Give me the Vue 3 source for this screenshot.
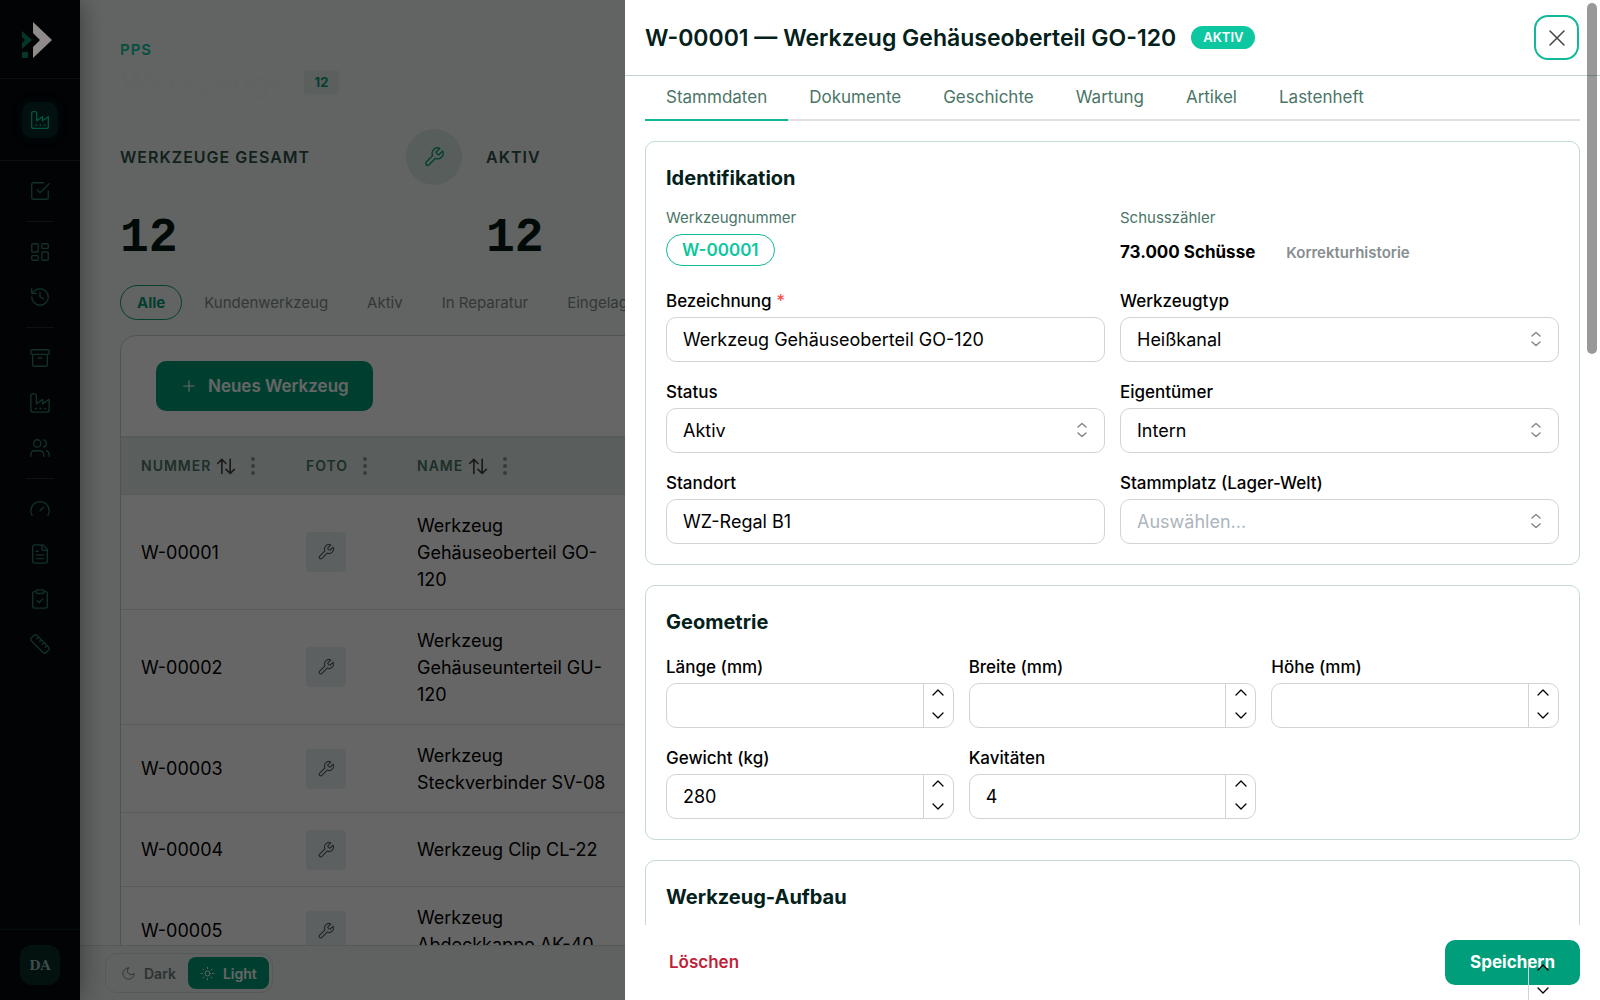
<script setup>
import { ref } from 'vue';

const icons = {
  factory: '<path d="M2 20a2 2 0 0 0 2 2h16a2 2 0 0 0 2-2V8l-7 5V8l-7 5V4a2 2 0 0 0-2-2H4a2 2 0 0 0-2 2Z"/><path d="M17 18h1M12 18h1M7 18h1"/>',
  check: '<path d="m9 11 3 3L22 4"/><path d="M21 12v7a2 2 0 0 1-2 2H5a2 2 0 0 1-2-2V5a2 2 0 0 1 2-2h11"/>',
  dashboard: '<rect x="3" y="3" width="7" height="9" rx="1"/><rect x="14" y="3" width="7" height="5" rx="1"/><rect x="14" y="12" width="7" height="9" rx="1"/><rect x="3" y="16" width="7" height="5" rx="1"/>',
  history: '<path d="M3 12a9 9 0 1 0 9-9 9.75 9.75 0 0 0-6.74 2.74L3 8"/><path d="M3 3v5h5"/><path d="M12 7v5l4 2"/>',
  archive: '<rect x="2" y="3" width="20" height="5" rx="1"/><path d="M4 8v11a2 2 0 0 0 2 2h12a2 2 0 0 0 2-2V8"/><path d="M10 12h4"/>',
  users: '<path d="M16 21v-2a4 4 0 0 0-4-4H6a4 4 0 0 0-4 4v2"/><circle cx="9" cy="7" r="4"/><path d="M22 21v-2a4 4 0 0 0-3-3.87"/><path d="M16 3.13a4 4 0 0 1 0 7.75"/>',
  gauge: '<path d="m12 14 4-4"/><path d="M3.34 19a10 10 0 1 1 17.32 0"/>',
  file: '<path d="M15 2H6a2 2 0 0 0-2 2v16a2 2 0 0 0 2 2h12a2 2 0 0 0 2-2V7Z"/><path d="M14 2v4a2 2 0 0 0 2 2h4"/><path d="M10 9H8M16 13H8M16 17H8"/>',
  clipboard: '<rect x="8" y="2" width="8" height="4" rx="1"/><path d="M16 4h2a2 2 0 0 1 2 2v14a2 2 0 0 1-2 2H6a2 2 0 0 1-2-2V6a2 2 0 0 1 2-2h2"/><path d="m9 14 2 2 4-4"/>',
  ruler: '<path d="M21.3 15.3a2.4 2.4 0 0 1 0 3.4l-2.6 2.6a2.4 2.4 0 0 1-3.4 0L2.7 8.7a2.41 2.41 0 0 1 0-3.4l2.6-2.6a2.41 2.41 0 0 1 3.4 0Z"/><path d="m14.5 12.5 2-2M11.5 9.5l2-2M8.5 6.5l2-2M17.5 15.5l2-2"/>',
  wrench: '<path d="M14.7 6.3a1 1 0 0 0 0 1.4l1.6 1.6a1 1 0 0 0 1.4 0l3.77-3.77a6 6 0 0 1-7.94 7.94l-6.91 6.91a2.12 2.12 0 0 1-3-3l6.91-6.91a6 6 0 0 1 7.94-7.94l-3.76 3.76z"/>',
  plus: '<path d="M5 12h14M12 5v14"/>',
  sort: '<path d="M7 21V4M2 9l5-5 5 5M17 4v17M12 16l5 5 5-5"/>',
  moon: '<path d="M12 3a6 6 0 0 0 9 9 9 9 0 1 1-9-9Z"/>',
  sun: '<circle cx="12" cy="12" r="4"/><path d="M12 2v2M12 20v2M4.9 4.9l1.4 1.4M17.7 17.7l1.4 1.4M2 12h2M20 12h2M6.3 17.7l-1.4 1.4M19.1 4.9l-1.4 1.4"/>',
  close: '<path d="M5 5l14 14M19 5 5 19"/>',
};

const navGroups = [
  ['check'],
  ['dashboard', 'history'],
  ['archive', 'factory', 'users'],
  ['gauge', 'file', 'clipboard', 'ruler'],
];

const kpis = [
  { label: 'Werkzeuge gesamt', value: 12, icon: 'wrench' },
  { label: 'Aktiv', value: 12 },
];

const filters = ['Alle', 'Kundenwerkzeug', 'Aktiv', 'In Reparatur', 'Eingelagert'];
const activeFilter = ref('Alle');

const rows = [
  { id: 'W-00001', name: 'Werkzeug Gehäuseoberteil GO-120' },
  { id: 'W-00002', name: 'Werkzeug Gehäuseunterteil GU-120' },
  { id: 'W-00003', name: 'Werkzeug Steckverbinder SV-08' },
  { id: 'W-00004', name: 'Werkzeug Clip CL-22' },
  { id: 'W-00005', name: 'Werkzeug Abdeckkappe AK-40' },
];

const tabs = ['Stammdaten', 'Dokumente', 'Geschichte', 'Wartung', 'Artikel', 'Lastenheft'];
const activeTab = ref('Stammdaten');

const idFields = ref([
  { id: 'bezeichnung', label: 'Bezeichnung', value: 'Werkzeug Gehäuseoberteil GO-120', required: true },
  { id: 'typ', label: 'Werkzeugtyp', value: 'Heißkanal', select: true },
  { id: 'status', label: 'Status', value: 'Aktiv', select: true },
  { id: 'eigentuemer', label: 'Eigentümer', value: 'Intern', select: true },
  { id: 'standort', label: 'Standort', value: 'WZ-Regal B1' },
  { id: 'stammplatz', label: 'Stammplatz (Lager-Welt)', value: '', select: true },
]);

const geoFields = ref([
  { id: 'laenge', label: 'Länge (mm)', value: '' },
  { id: 'breite', label: 'Breite (mm)', value: '' },
  { id: 'hoehe', label: 'Höhe (mm)', value: '' },
  { id: 'gewicht', label: 'Gewicht (kg)', value: 280 },
  { id: 'kavitaeten', label: 'Kavitäten', value: 4 },
]);

const buildFields = ref([{ id: 'aufbau', label: '', value: '' }]);

const step = (field, delta) => {
  field.value = Number(field.value || 0) + delta;
};
</script>

<template>
  <div class="app">
    <aside class="sidebar">
      <a href="#" class="logo" aria-label="Start">
        <svg width="30" height="36" viewBox="0 0 30 36">
          <path d="M11 0 30 18 11 36V25l7-7-7-7Z" fill="#8f8b8b" />
          <path d="M0 9l10 9-10 9v-6l3-3-3-3Z" fill="#06352b" />
          <rect y="30" width="6" height="6" fill="#06352b" />
        </svg>
      </a>
      <div class="module">
        <a href="#" class="module-link" aria-label="PPS">
          <svg class="icon" width="20" height="20" viewBox="0 0 24 24" v-html="icons.factory"></svg>
        </a>
      </div>
      <nav class="nav">
        <div v-for="(group, i) in navGroups" :key="i" class="nav-group">
          <a v-for="name in group" :key="name" href="#" class="nav-link" :aria-label="name">
            <svg class="icon" width="22" height="22" viewBox="0 0 24 24" v-html="icons[name]"></svg>
          </a>
        </div>
      </nav>
      <div class="user"><button class="avatar">DA</button></div>
    </aside>

    <main class="main">
      <header class="page-head">
        <div class="eyebrow">PPS</div>
        <div class="title-row">
          <h1>Werkzeuge</h1>
          <span class="count">12</span>
        </div>
      </header>

      <section class="kpis">
        <div v-for="kpi in kpis" :key="kpi.label" class="kpi">
          <div class="kpi-head">
            <span class="kpi-label">{{ kpi.label }}</span>
            <span v-if="kpi.icon" class="kpi-icon">
              <svg class="icon" width="22" height="22" viewBox="0 0 24 24" v-html="icons[kpi.icon]"></svg>
            </span>
          </div>
          <div class="kpi-value">{{ kpi.value }}</div>
        </div>
      </section>

      <div class="filters">
        <button v-for="f in filters" :key="f" class="chip" :class="{ active: f === activeFilter }" @click="activeFilter = f">{{ f }}</button>
      </div>

      <section class="table-card">
        <div class="toolbar">
          <button class="new-btn">
            <svg class="icon" width="18" height="18" viewBox="0 0 24 24" v-html="icons.plus"></svg>
            Neues Werkzeug
          </button>
        </div>
        <table>
          <colgroup>
            <col class="col-id" /><col class="col-photo" /><col class="col-name" /><col />
          </colgroup>
          <thead>
            <tr>
              <th>
                <div class="th">Nummer
                  <svg class="icon sort" width="20" height="20" viewBox="0 0 24 24" v-html="icons.sort"></svg>
                  <span class="dots"><i></i><i></i><i></i></span>
                </div>
              </th>
              <th><div class="th">Foto<span class="dots"><i></i><i></i><i></i></span></div></th>
              <th>
                <div class="th">Name
                  <svg class="icon sort" width="20" height="20" viewBox="0 0 24 24" v-html="icons.sort"></svg>
                  <span class="dots"><i></i><i></i><i></i></span>
                </div>
              </th>
              <th></th>
            </tr>
          </thead>
          <tbody>
            <tr v-for="row in rows" :key="row.id">
              <td>{{ row.id }}</td>
              <td>
                <div class="photo">
                  <svg class="icon" width="18" height="18" viewBox="0 0 24 24" v-html="icons.wrench"></svg>
                </div>
              </td>
              <td>{{ row.name }}</td>
              <td></td>
            </tr>
          </tbody>
        </table>
      </section>
    </main>

    <footer class="bottom-bar">
      <div class="theme">
        <button>
          <svg class="icon" width="15" height="15" viewBox="0 0 24 24" v-html="icons.moon"></svg>Dark
        </button>
        <button class="on">
          <svg class="icon" width="15" height="15" viewBox="0 0 24 24" v-html="icons.sun"></svg>Light
        </button>
      </div>
    </footer>

    <div class="backdrop"></div>

    <div class="drawer" role="dialog">
      <div class="drawer-scroll">
        <header class="drawer-head">
          <h2>W-00001 — Werkzeug Gehäuseoberteil GO-120</h2>
          <span class="badge">AKTIV</span>
          <button class="close" aria-label="Schließen">
            <svg class="icon" width="24" height="24" viewBox="0 0 24 24" v-html="icons.close"></svg>
          </button>
        </header>

        <div class="drawer-body">
          <div class="tabs" role="tablist">
            <button v-for="t in tabs" :key="t" role="tab" class="tab" :class="{ active: t === activeTab }" @click="activeTab = t">{{ t }}</button>
          </div>

          <section class="card">
            <h3>Identifikation</h3>
            <div class="grid two">
              <div class="fact">
                <span class="fact-label">Werkzeugnummer</span>
                <span class="number-pill">W-00001</span>
              </div>
              <div class="fact">
                <span class="fact-label">Schusszähler</span>
                <div class="shots">
                  <strong>73.000 Schüsse</strong>
                  <button class="history-btn">Korrekturhistorie</button>
                </div>
              </div>
              <div v-for="f in idFields" :key="f.id" class="field">
                <label :for="f.id">{{ f.label }} <span v-if="f.required" class="req">*</span></label>
                <div v-if="f.select" class="control">
                  <select :id="f.id" v-model="f.value" :class="{ empty: !f.value }">
                    <option :value="f.value">{{ f.value || 'Auswählen...' }}</option>
                  </select>
                  <svg class="icon updown" width="10" height="16" viewBox="0 0 10 16"><path d="M1 5l4-3.5 4 3.5M1 11l4 3.5 4-3.5" /></svg>
                </div>
                <input v-else :id="f.id" v-model="f.value" type="text" />
              </div>
            </div>
          </section>

          <section class="card">
            <h3>Geometrie</h3>
            <div class="grid three">
              <div v-for="f in geoFields" :key="f.id" class="field">
                <label :for="f.id">{{ f.label }}</label>
                <div class="control">
                  <input :id="f.id" v-model="f.value" type="number" />
                  <div class="stepper">
                    <button class="up" aria-label="+" @click="step(f, 1)"><svg class="icon" width="12" height="8" viewBox="0 0 12 8"><path d="M1 6l5-5 5 5" /></svg></button>
                    <button class="down" aria-label="−" @click="step(f, -1)"><svg class="icon" width="12" height="8" viewBox="0 0 12 8"><path d="M1 2l5 5 5-5" /></svg></button>
                  </div>
                </div>
              </div>
            </div>
          </section>

          <section class="card">
            <h3>Werkzeug-Aufbau</h3>
            <div class="grid three">
              <div v-for="f in buildFields" :key="f.id" class="field last-col">
                <label :for="f.id">{{ f.label }}</label>
                <div class="control">
                  <input :id="f.id" v-model="f.value" type="number" />
                  <div class="stepper">
                    <button class="up" aria-label="+" @click="step(f, 1)"><svg class="icon" width="12" height="8" viewBox="0 0 12 8"><path d="M1 6l5-5 5 5" /></svg></button>
                    <button class="down" aria-label="−" @click="step(f, -1)"><svg class="icon" width="12" height="8" viewBox="0 0 12 8"><path d="M1 2l5 5 5-5" /></svg></button>
                  </div>
                </div>
              </div>
            </div>
          </section>
        </div>

        <footer class="drawer-foot">
          <button class="delete">Löschen</button>
          <button class="save">Speichern</button>
        </footer>
      </div>
      <div class="scroll-thumb"></div>
    </div>
  </div>
</template>

<style>
body {
  overflow: hidden;
}
</style>

<style scoped>
.app {
  position: relative;
  height: 100vh;
  overflow: hidden;
  font-family: Inter, "Liberation Sans", sans-serif;
  font-size: 18px;
  line-height: 27px;
  color: #000;
  background: #f6faf9;
}

.app * {
  box-sizing: border-box;
}

button,
input,
select {
  font: inherit;
  color: inherit;
  background: none;
  border: 0;
  padding: 0;
  margin: 0;
}

h1, h2, h3 {
  margin: 0;
}

.icon {
  display: block;
  flex: none;
  fill: none;
  stroke: currentColor;
  stroke-width: 1.5;
  stroke-linecap: round;
  stroke-linejoin: round;
}

/* Sidebar */
.sidebar {
  position: fixed;
  top: 0;
  bottom: 0;
  left: 0;
  z-index: 3;
  width: 80px;
  display: flex;
  flex-direction: column;
  background: #010305;
  color: #12302b;
  box-shadow: 0 0 28px rgba(0, 0, 0, 0.45);
}

.logo {
  height: 78px;
  padding: 22px 0 0 22px;
}

.module {
  height: 83px;
  display: flex;
  align-items: center;
  justify-content: center;
  border-top: 1px solid #081013;
  border-bottom: 1px solid #081013;
}

.module-link {
  width: 36px;
  height: 36px;
  border-radius: 10px;
  display: flex;
  align-items: center;
  justify-content: center;
  background: #02110f;
  color: #04573f;
  box-shadow: 0 0 10px #020b0b;
}

.nav {
  flex: 1;
  padding-top: 7px;
}

.nav-group + .nav-group::before {
  content: "";
  display: block;
  width: 28px;
  height: 1px;
  margin: 8px auto 7px;
  background: #0a1214;
}

.nav-link {
  height: 45px;
  display: flex;
  align-items: center;
  justify-content: center;
  color: inherit;
}

.user {
  height: 71px;
  display: flex;
  align-items: center;
  justify-content: center;
  border-top: 1px solid #060f10;
}

.avatar {
  width: 40px;
  height: 40px;
  border-radius: 12px;
  background: #04120f;
  color: #3c4c49;
  font-family: "DejaVu Serif", serif;
  font-size: 13px;
  font-weight: 700;
}

/* Page */
.main {
  height: calc(100vh - 55px);
  overflow: hidden;
  padding: 37px 40px 0 120px;
}

.eyebrow {
  font-size: 15px;
  line-height: 25px;
  font-weight: 600;
  letter-spacing: 1px;
  color: #0cc79d;
}

.title-row {
  display: flex;
  align-items: center;
  gap: 16px;
  height: 40px;
}

h1 {
  font-size: 30px;
  line-height: 40px;
  color: #f3f8f7;
}

.count {
  padding: 0 11px;
  font-size: 13px;
  line-height: 24px;
  font-weight: 700;
  color: #0a9c78;
  background: #e4efec;
  border-radius: 4px;
}

.kpis {
  display: flex;
  gap: 24px;
  margin-top: 27px;
}

.kpi {
  width: 342px;
}

.kpi-head {
  display: flex;
  align-items: center;
  justify-content: space-between;
  height: 56px;
}

.kpi-label {
  font-size: 16px;
  font-weight: 600;
  letter-spacing: 1px;
  text-transform: uppercase;
  color: #2d5447;
}

.kpi-icon {
  width: 56px;
  height: 56px;
  border-radius: 50%;
  display: flex;
  align-items: center;
  justify-content: center;
  background: #dceae6;
  color: #0a9c78;
}

.kpi-value {
  margin-top: 16px;
  height: 84px;
  font-family: "Liberation Mono", monospace;
  font-size: 48px;
  line-height: 74px;
  font-weight: 700;
  color: #051a15;
}

.filters {
  display: flex;
  gap: 5px;
}

.chip {
  height: 35px;
  padding: 0 16px;
  border: 1px solid transparent;
  border-radius: 18px;
  font-size: 15px;
  line-height: 33px;
  color: #7d8c88;
  white-space: nowrap;
}

.chip.active {
  border-color: #0a9c78;
  color: #0a9c78;
  font-weight: 700;
}

.table-card {
  margin-top: 15px;
  border: 1px solid #c5d3cf;
  border-radius: 16px;
  background: #fff;
  overflow: hidden;
}

.toolbar {
  padding: 25px 35px;
  border-bottom: 2px solid #d6e0dd;
}

.new-btn {
  display: flex;
  align-items: center;
  gap: 10px;
  height: 50px;
  padding: 0 24px;
  border-radius: 10px;
  background: #009e78;
  color: #fff;
  font-size: 17px;
  font-weight: 600;
}

table {
  width: 100%;
  table-layout: fixed;
  border-collapse: collapse;
}

.col-id {
  width: 165px;
}

.col-photo {
  width: 111px;
}

.col-name {
  width: 236px;
}

th {
  height: 56px;
  padding: 0 20px;
  text-align: left;
  font-size: 14px;
  font-weight: 600;
  letter-spacing: 1px;
  text-transform: uppercase;
  color: #4a7567;
  background: #e2ece9;
  border-bottom: 1px solid #d9e2df;
}

.th {
  display: flex;
  align-items: center;
  gap: 5px;
}

.sort {
  stroke-width: 2;
  color: #444;
}

.dots {
  display: flex;
  flex-direction: column;
  gap: 3px;
  margin-left: 10px;
}

.dots i {
  width: 4px;
  height: 4px;
  border-radius: 50%;
  background: #8a9693;
}

td {
  padding: 17px 20px 16px;
  border-bottom: 1px solid #dde3e1;
  vertical-align: middle;
}

.photo {
  width: 40px;
  height: 40px;
  border-radius: 4px;
  display: flex;
  align-items: center;
  justify-content: center;
  background: #e8f1ef;
  color: #4f5f5b;
}

.bottom-bar {
  position: fixed;
  left: 80px;
  right: 0;
  bottom: 0;
  height: 55px;
  padding: 7px 25px;
  background: #f0f5f3;
  border-top: 1px solid #d3dedb;
}

.theme {
  display: inline-flex;
  height: 40px;
  padding: 3px;
  border: 1px solid #d5dfdc;
  border-radius: 12px;
}

.theme button {
  display: flex;
  align-items: center;
  gap: 8px;
  padding: 0 12px;
  border-radius: 8px;
  font-size: 14px;
  font-weight: 600;
  color: #6d7d79;
}

.theme .on {
  background: #009e78;
  color: #fff;
}

.backdrop {
  position: fixed;
  inset: 0;
  z-index: 2;
  background: rgba(0, 0, 0, 0.6);
}

/* Drawer */
.drawer {
  position: fixed;
  top: 0;
  right: 0;
  bottom: 0;
  z-index: 4;
  width: calc(61% - 1px);
  background: #fff;
}

.drawer-scroll {
  height: 100%;
  overflow-y: auto;
  scrollbar-width: none;
}

.drawer-head {
  position: sticky;
  top: 0;
  z-index: 3;
  display: flex;
  align-items: center;
  height: 76px;
  padding: 0 21px 0 20px;
  background: #fff;
  border-bottom: 1px solid #c0d6ce;
}

h2 {
  font-size: 23px;
  line-height: 30px;
  font-weight: 600;
  color: #04201a;
}

.badge {
  margin-left: 15px;
  padding: 0 12px;
  border-radius: 12px;
  font-size: 13px;
  line-height: 23px;
  font-weight: 600;
  color: #fff;
  background: #0cc7a0;
}

.close {
  width: 45px;
  height: 45px;
  margin-left: auto;
  display: flex;
  align-items: center;
  justify-content: center;
  border: 2px solid #12b999;
  border-radius: 14px;
  color: #444;
}

.drawer-body {
  display: flex;
  flex-direction: column;
  gap: 20px;
  padding: 0 20px 20px;
}

.tabs {
  display: flex;
  height: 45px;
  border-bottom: 2px solid #dee2e4;
}

.tab {
  height: 45px;
  padding: 0 21px;
  font-size: 17px;
  color: #4a7567;
  border-bottom: 2px solid transparent;
}

.tab.active {
  border-color: #12b999;
}

.card {
  padding: 20px;
  border: 1px solid #c4dad3;
  border-radius: 10px;
}

h3 {
  margin-bottom: 14px;
  font-size: 20px;
  line-height: 33px;
  font-weight: 700;
  color: #04201a;
}

.grid {
  display: grid;
  gap: 16px 15px;
}

.two {
  grid-template-columns: 1fr 1fr;
}

.three {
  grid-template-columns: 1fr 1fr 1fr;
}

.last-col {
  grid-column: 3;
}

.fact {
  display: flex;
  flex-direction: column;
  align-items: flex-start;
  gap: 8px;
}

.fact-label {
  font-size: 15px;
  line-height: 17px;
  color: #4a7567;
}

.number-pill {
  padding: 0 15px;
  border: 1px solid #12b999;
  border-radius: 16px;
  font-size: 17px;
  line-height: 30px;
  font-weight: 600;
  color: #0cc79d;
}

.shots {
  display: flex;
  align-items: center;
  gap: 31px;
  height: 37px;
}

strong {
  font-size: 17px;
  font-weight: 700;
}

.history-btn {
  font-size: 15px;
  font-weight: 600;
  color: #868e90;
}

.field {
  display: flex;
  flex-direction: column;
  gap: 1px;
}

.field label {
  min-height: 29px;
  font-size: 17px;
  line-height: 29px;
  font-weight: 500;
}

.req {
  color: #fa5252;
}

.control {
  position: relative;
}

.field input,
.field select {
  display: block;
  width: 100%;
  height: 45px;
  padding: 0 16px;
  border: 1px solid #d0d4d6;
  border-radius: 10px;
  appearance: none;
}

.field select.empty {
  color: #adb5bd;
}

input[type="number"] {
  appearance: textfield;
}

.updown {
  position: absolute;
  right: 18px;
  top: 14px;
  color: #868686;
  pointer-events: none;
}

/* Sits on top of the input's right end */
.stepper {
  position: absolute;
  top: 1px;
  right: 1px;
  bottom: 1px;
  z-index: 2;
  width: 30px;
  display: flex;
  flex-direction: column;
  border-left: 1px solid #d0d4d6;
}

.stepper button {
  display: flex;
  align-items: center;
  justify-content: center;
}

.stepper .icon {
  stroke-width: 1.3;
}

.up {
  height: 18px;
}

.down {
  flex: 1;
}

.drawer-foot {
  position: sticky;
  bottom: 0;
  z-index: 1;
  display: flex;
  align-items: center;
  justify-content: space-between;
  height: 75px;
  padding: 0 20px 0 44px;
  background: #fff;
  font-size: 17px;
}

.delete {
  font-weight: 600;
  color: #c01f3a;
}

.save {
  height: 45px;
  padding: 0 25px;
  border-radius: 10px;
  font-weight: 700;
  color: #fff;
  background: #009e7a;
}

.scroll-thumb {
  position: absolute;
  top: 3px;
  right: 3px;
  z-index: 5;
  width: 10px;
  height: 351px;
  border-radius: 5px;
  background: rgba(0, 0, 0, 0.4);
}
</style>
